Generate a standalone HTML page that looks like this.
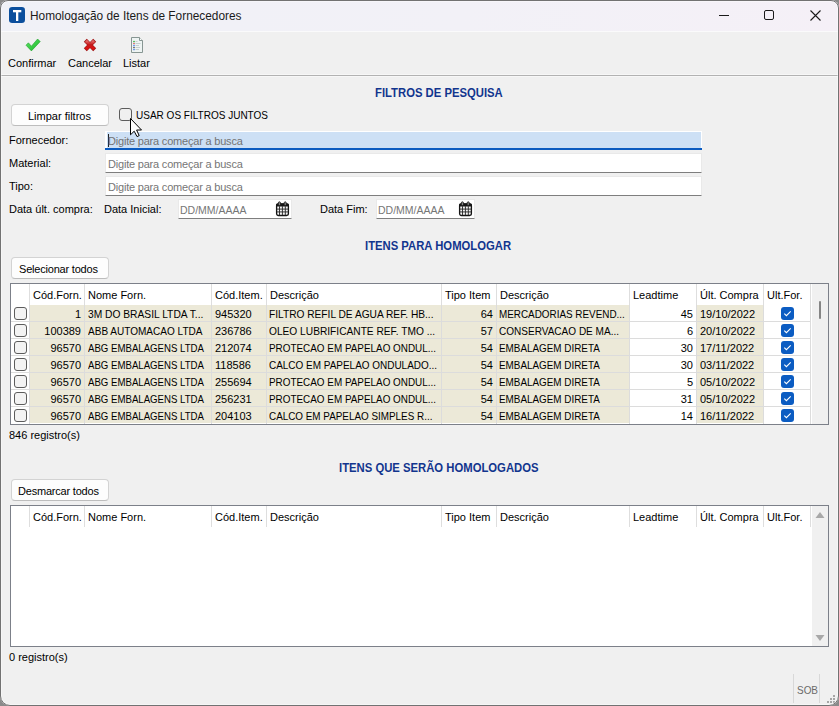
<!DOCTYPE html><html><head><meta charset="utf-8"><style>
*{margin:0;padding:0;box-sizing:border-box}
html,body{width:839px;height:706px;overflow:hidden;background:#8c8c8c}
body{position:relative;font-family:"Liberation Sans", sans-serif;font-size:11px;color:#000}
.abs{position:absolute}
.t{position:absolute;white-space:nowrap;line-height:13px;font-size:11px;color:#000}
.win{position:absolute;left:0;top:0;width:839px;height:706px;background:#f0f0f0;overflow:hidden}
.hl{position:absolute;left:0;top:0;width:839px;height:706px;border-radius:8px 8px 10px 10px;border:1px solid #727272;box-shadow:0 0 0 40px #8a8a8a,inset 0 0 0 1px rgba(255,255,255,.4);pointer-events:none}
.title{position:absolute;left:0;top:0;width:839px;height:31px;background:linear-gradient(90deg,#f0f1f7 0%,#f2f1f7 55%,#f5f0f7 100%)}
.btn{position:absolute;background:#fdfdfd;border:1px solid #d3d3d3;border-bottom-color:#bdbdbd;border-radius:4px}
.sec{position:absolute;white-space:nowrap;line-height:13px;font-size:11px;font-weight:bold;color:#12358e}
.inp{position:absolute;background:#fff;border:1px solid #e9e9e9;border-bottom:1px solid #7e7e7e;border-radius:1px}
.ph{position:absolute;white-space:nowrap;line-height:13px;font-size:11px;color:#767676}
.grid{position:absolute;background:#fff;border:1px solid #7c8089}
.cb{position:absolute;width:13px;height:13px;border:1px solid #5c5c5c;border-radius:3px;background:#f3f3f3}
.cbb{position:absolute;width:13px;height:13px;border-radius:3px;background:#0b5cc2}
.vl{position:absolute;width:1px;background:#dadada}
</style></head><body>
<div class="win">
<div class="title"></div>
<div class="abs" style="left:0px;top:31px;width:839px;height:1px;background:#fafafb"></div>
<svg class="abs" style="left:8px;top:6px" width="18" height="18" viewBox="0 0 18 18"><rect x="1" y="1" width="16" height="16" rx="3.2" fill="#0b4f9d"/><rect x="5" y="4" width="8.3" height="2.3" fill="#fff"/><rect x="8" y="5" width="2.3" height="10" fill="#fff"/></svg>
<div class="t" style="left:30px;top:9px;font-size:12px;line-height:14px;color:#1a1a1a;transform:scaleX(0.9877);transform-origin:0 0">Homologação de Itens de Fornecedores</div>
<div class="abs" style="left:719px;top:15px;width:10px;height:1px;background:#1a1a1a"></div>
<div class="abs" style="left:764px;top:10px;width:10px;height:10px;border:1px solid #1a1a1a;border-radius:2px"></div>
<svg class="abs" style="left:809px;top:9px" width="12" height="12" viewBox="0 0 12 12"><path d="M1.5 1.5L11.5 11.5M11.5 1.5L1.5 11.5" stroke="#1a1a1a" stroke-width="1.1"/></svg>
<svg class="abs" style="left:0;top:0" width="160" height="60" viewBox="0 0 160 60"><defs><linearGradient id="gx" x1="0" y1="0" x2="0" y2="1"><stop offset="0" stop-color="#e46a6a"/><stop offset="0.45" stop-color="#c41a1a"/><stop offset="1" stop-color="#e01010"/></linearGradient><linearGradient id="gc" x1="0" y1="0" x2="1" y2="1"><stop offset="0" stop-color="#5fe36a"/><stop offset="1" stop-color="#17b824"/></linearGradient></defs><path d="M26 45.2L28.4 42.8L31.4 46.2L37.6 39L40.2 41.6L31.4 50.9Z" fill="url(#gc)" stroke="#1e9e28" stroke-width="0.6" stroke-linejoin="round"/><path d="M85.3 40.3L94.7 49.7M94.7 40.3L85.3 49.7" stroke="#a01212" stroke-width="4.2"/><path d="M85.9 40.9L94.1 49.1M94.1 40.9L85.9 49.1" stroke="url(#gx)" stroke-width="3"/><path d="M131.5 37.5H139.5L142.5 40.5V52.5H131.5Z" fill="#eef4f3" stroke="#879693" stroke-width="1"/><path d="M139.5 37.5V40.5H142.5" fill="#fff" stroke="#879693" stroke-width="1"/><circle cx="134" cy="41.5" r="0.85" fill="#2fae3a"/><circle cx="134" cy="43.5" r="0.85" fill="#d25a5a"/><circle cx="134" cy="45.5" r="0.85" fill="#4a80f0"/><circle cx="134" cy="47.5" r="0.85" fill="#555"/><circle cx="134" cy="49.5" r="0.85" fill="#4a80f0"/><path d="M135.5 41.5H137.5M135.5 43.5H140.5M135.5 45.5H139M135.5 47.5H140M135.5 49.5H139" stroke="#c3cfcf" stroke-width="1"/></svg>
<div class="t" style="left:8px;top:57px;">Confirmar</div>
<div class="t" style="left:68px;top:57px;">Cancelar</div>
<div class="t" style="left:123px;top:57px;">Listar</div>
<div class="abs" style="left:1px;top:74px;width:837px;height:1px;background:#f7f7f7"></div>
<div class="abs" style="left:1px;top:75px;width:837px;height:1px;background:#b2b2b2"></div>
<div class="abs" style="left:1px;top:76px;width:837px;height:1px;background:#f7f7f7"></div>
<div class="sec" style="left:374.5px;top:87px;transform:scaleX(0.9404);transform-origin:0 0;font-size:12px">FILTROS DE PESQUISA</div>
<div class="btn" style="left:11px;top:104px;width:98px;height:22px"></div>
<div class="t" style="left:28px;top:110px;">Limpar filtros</div>
<div class="cb" style="left:119px;top:108px;background:#f0f0f0"></div>
<div class="t" style="left:135.5px;top:109px;transform:scaleX(0.9100);transform-origin:0 0;">USAR OS FILTROS JUNTOS</div>
<div class="t" style="left:9px;top:134px;">Fornecedor:</div>
<div class="t" style="left:9px;top:157px;">Material:</div>
<div class="t" style="left:9px;top:180px;">Tipo:</div>
<div class="t" style="left:9px;top:203px;">Data últ. compra:</div>
<div class="abs" style="left:105px;top:131px;width:597px;height:19px;background:#fff"></div>
<div class="abs" style="left:107px;top:132px;width:594px;height:16px;background:#cde0f5"></div>
<div class="abs" style="left:105px;top:148px;width:597px;height:2px;background:#0b5bc0"></div>
<div class="abs" style="left:108px;top:134px;width:1px;height:13px;background:#222"></div>
<div class="ph" style="left:108px;top:135px;color:#737373;letter-spacing:-0.2px">Digite para começar a busca</div>
<div class="inp" style="left:105px;top:153px;width:597px;height:20px"></div>
<div class="ph" style="left:108px;top:158px;letter-spacing:-0.2px">Digite para começar a busca</div>
<div class="inp" style="left:105px;top:176px;width:597px;height:20px"></div>
<div class="ph" style="left:108px;top:181px;letter-spacing:-0.2px">Digite para começar a busca</div>
<div class="t" style="left:104px;top:203px;">Data Inicial:</div>
<div class="t" style="left:320px;top:203px;">Data Fim:</div>
<div class="inp" style="left:178px;top:199px;width:114px;height:20px"></div>
<div class="ph" style="left:179.5px;top:204px;transform:scaleX(0.9544);transform-origin:0 0;">DD/MM/AAAA</div>
<svg class="abs" style="left:274.5px;top:201px" width="15" height="16" viewBox="0 0 16 17"><rect x="1.7" y="3" width="12.6" height="12.4" rx="2" fill="#f4f4f4" stroke="#151515" stroke-width="1.4"/><rect x="1.2" y="2.5" width="13.6" height="3.4" rx="1.5" fill="#151515"/><path d="M4.8 5.5V15M7.9 5.5V15M11 5.5V15M2 8.6H14M2 11.6H14" stroke="#2a2a2a" stroke-width="1"/><rect x="3.6" y="0.8" width="2.2" height="4" rx="1.1" fill="#8a8a8a" stroke="#151515" stroke-width="0.8"/><rect x="9.8" y="0.8" width="2.2" height="4" rx="1.1" fill="#8a8a8a" stroke="#151515" stroke-width="0.8"/></svg>
<div class="inp" style="left:376px;top:199px;width:99px;height:20px"></div>
<div class="ph" style="left:377.5px;top:204px;transform:scaleX(0.9544);transform-origin:0 0;">DD/MM/AAAA</div>
<svg class="abs" style="left:457.5px;top:201px" width="15" height="16" viewBox="0 0 16 17"><rect x="1.7" y="3" width="12.6" height="12.4" rx="2" fill="#f4f4f4" stroke="#151515" stroke-width="1.4"/><rect x="1.2" y="2.5" width="13.6" height="3.4" rx="1.5" fill="#151515"/><path d="M4.8 5.5V15M7.9 5.5V15M11 5.5V15M2 8.6H14M2 11.6H14" stroke="#2a2a2a" stroke-width="1"/><rect x="3.6" y="0.8" width="2.2" height="4" rx="1.1" fill="#8a8a8a" stroke="#151515" stroke-width="0.8"/><rect x="9.8" y="0.8" width="2.2" height="4" rx="1.1" fill="#8a8a8a" stroke="#151515" stroke-width="0.8"/></svg>
<div class="sec" style="left:364.5px;top:240px;transform:scaleX(0.9404);transform-origin:0 0;font-size:12px">ITENS PARA HOMOLOGAR</div>
<div class="btn" style="left:11px;top:257px;width:98px;height:22px"></div>
<div class="t" style="left:19px;top:263px;letter-spacing:-0.2px">Selecionar todos</div>
<div class="grid" style="left:10px;top:283px;width:819px;height:142px"></div>
<div class="abs" style="left:812px;top:284px;width:16px;height:140px;background:#f0f0f0"></div>
<div class="vl" style="left:29px;top:284px;height:21px;background:#dedede"></div>
<div class="vl" style="left:84px;top:284px;height:21px;background:#dedede"></div>
<div class="vl" style="left:211px;top:284px;height:21px;background:#dedede"></div>
<div class="vl" style="left:266px;top:284px;height:21px;background:#dedede"></div>
<div class="vl" style="left:441px;top:284px;height:21px;background:#dedede"></div>
<div class="vl" style="left:496px;top:284px;height:21px;background:#dedede"></div>
<div class="vl" style="left:629px;top:284px;height:21px;background:#dedede"></div>
<div class="vl" style="left:696px;top:284px;height:21px;background:#dedede"></div>
<div class="vl" style="left:763px;top:284px;height:21px;background:#dedede"></div>
<div class="vl" style="left:810px;top:284px;height:21px;background:#dedede"></div>
<div class="t" style="left:33px;top:289px;">Cód.Forn.</div>
<div class="t" style="left:88px;top:289px;">Nome Forn.</div>
<div class="t" style="left:215px;top:289px;">Cód.Item.</div>
<div class="t" style="left:270px;top:289px;">Descrição</div>
<div class="t" style="left:445px;top:289px;">Tipo Item</div>
<div class="t" style="left:500px;top:289px;">Descrição</div>
<div class="t" style="left:633px;top:289px;">Leadtime</div>
<div class="t" style="left:700px;top:289px;">Últ. Compra</div>
<div class="t" style="left:767px;top:289px;">Ult.For.</div>
<div class="abs" style="left:30px;top:305px;width:599px;height:16px;background:#ece9d8"></div>
<div class="abs" style="left:697px;top:305px;width:66px;height:16px;background:#ece9d8"></div>
<div class="abs" style="left:11px;top:321px;width:800px;height:1px;background:#dcdcdc"></div>
<div class="vl" style="left:29px;top:305px;height:17px;background:#dcdcdc"></div>
<div class="vl" style="left:84px;top:305px;height:17px;background:#dcdcdc"></div>
<div class="vl" style="left:211px;top:305px;height:17px;background:#dcdcdc"></div>
<div class="vl" style="left:266px;top:305px;height:17px;background:#dcdcdc"></div>
<div class="vl" style="left:441px;top:305px;height:17px;background:#dcdcdc"></div>
<div class="vl" style="left:496px;top:305px;height:17px;background:#dcdcdc"></div>
<div class="vl" style="left:629px;top:305px;height:17px;background:#dcdcdc"></div>
<div class="vl" style="left:696px;top:305px;height:17px;background:#dcdcdc"></div>
<div class="vl" style="left:763px;top:305px;height:17px;background:#dcdcdc"></div>
<div class="vl" style="left:810px;top:305px;height:17px;background:#dcdcdc"></div>
<div class="cb" style="left:14px;top:307px"></div>
<div class="t" style="left:30px;top:308px;width:51px;text-align:right">1</div>
<div class="t" style="left:87.5px;top:308px;transform:scaleX(0.9312);transform-origin:0 0;">3M DO BRASIL LTDA T...</div>
<div class="t" style="left:215px;top:308px;">945320</div>
<div class="t" style="left:268.5px;top:308px;transform:scaleX(0.9248);transform-origin:0 0;">FILTRO REFIL DE AGUA REF. HB...</div>
<div class="t" style="left:442px;top:308px;width:51px;text-align:right">64</div>
<div class="t" style="left:499px;top:308px;transform:scaleX(0.8988);transform-origin:0 0;">MERCADORIAS REVEND...</div>
<div class="t" style="left:630px;top:308px;width:63px;text-align:right">45</div>
<div class="t" style="left:700px;top:308px;">19/10/2022</div>
<svg class="abs" style="left:781px;top:307px" width="13" height="13" viewBox="0 0 13 13"><rect width="13" height="13" rx="3" fill="#0b5cc2"/><path d="M3.3 6.6L5.4 8.7L9.7 4.4" stroke="#fff" stroke-width="1.1" fill="none"/></svg>
<div class="abs" style="left:30px;top:322px;width:599px;height:16px;background:#ece9d8"></div>
<div class="abs" style="left:697px;top:322px;width:66px;height:16px;background:#ece9d8"></div>
<div class="abs" style="left:11px;top:338px;width:800px;height:1px;background:#dcdcdc"></div>
<div class="vl" style="left:29px;top:322px;height:17px;background:#dcdcdc"></div>
<div class="vl" style="left:84px;top:322px;height:17px;background:#dcdcdc"></div>
<div class="vl" style="left:211px;top:322px;height:17px;background:#dcdcdc"></div>
<div class="vl" style="left:266px;top:322px;height:17px;background:#dcdcdc"></div>
<div class="vl" style="left:441px;top:322px;height:17px;background:#dcdcdc"></div>
<div class="vl" style="left:496px;top:322px;height:17px;background:#dcdcdc"></div>
<div class="vl" style="left:629px;top:322px;height:17px;background:#dcdcdc"></div>
<div class="vl" style="left:696px;top:322px;height:17px;background:#dcdcdc"></div>
<div class="vl" style="left:763px;top:322px;height:17px;background:#dcdcdc"></div>
<div class="vl" style="left:810px;top:322px;height:17px;background:#dcdcdc"></div>
<div class="cb" style="left:14px;top:324px"></div>
<div class="t" style="left:30px;top:325px;width:51px;text-align:right">100389</div>
<div class="t" style="left:87.5px;top:325px;transform:scaleX(0.9118);transform-origin:0 0;">ABB AUTOMACAO LTDA</div>
<div class="t" style="left:215px;top:325px;">236786</div>
<div class="t" style="left:268.5px;top:325px;transform:scaleX(0.9255);transform-origin:0 0;">OLEO LUBRIFICANTE REF. TMO ...</div>
<div class="t" style="left:442px;top:325px;width:51px;text-align:right">57</div>
<div class="t" style="left:499px;top:325px;transform:scaleX(0.9117);transform-origin:0 0;">CONSERVACAO DE MA...</div>
<div class="t" style="left:630px;top:325px;width:63px;text-align:right">6</div>
<div class="t" style="left:700px;top:325px;">20/10/2022</div>
<svg class="abs" style="left:781px;top:324px" width="13" height="13" viewBox="0 0 13 13"><rect width="13" height="13" rx="3" fill="#0b5cc2"/><path d="M3.3 6.6L5.4 8.7L9.7 4.4" stroke="#fff" stroke-width="1.1" fill="none"/></svg>
<div class="abs" style="left:30px;top:339px;width:599px;height:16px;background:#ece9d8"></div>
<div class="abs" style="left:697px;top:339px;width:66px;height:16px;background:#ece9d8"></div>
<div class="abs" style="left:11px;top:355px;width:800px;height:1px;background:#dcdcdc"></div>
<div class="vl" style="left:29px;top:339px;height:17px;background:#dcdcdc"></div>
<div class="vl" style="left:84px;top:339px;height:17px;background:#dcdcdc"></div>
<div class="vl" style="left:211px;top:339px;height:17px;background:#dcdcdc"></div>
<div class="vl" style="left:266px;top:339px;height:17px;background:#dcdcdc"></div>
<div class="vl" style="left:441px;top:339px;height:17px;background:#dcdcdc"></div>
<div class="vl" style="left:496px;top:339px;height:17px;background:#dcdcdc"></div>
<div class="vl" style="left:629px;top:339px;height:17px;background:#dcdcdc"></div>
<div class="vl" style="left:696px;top:339px;height:17px;background:#dcdcdc"></div>
<div class="vl" style="left:763px;top:339px;height:17px;background:#dcdcdc"></div>
<div class="vl" style="left:810px;top:339px;height:17px;background:#dcdcdc"></div>
<div class="cb" style="left:14px;top:341px"></div>
<div class="t" style="left:30px;top:342px;width:51px;text-align:right">96570</div>
<div class="t" style="left:87.5px;top:342px;transform:scaleX(0.8758);transform-origin:0 0;">ABG EMBALAGENS LTDA</div>
<div class="t" style="left:215px;top:342px;">212074</div>
<div class="t" style="left:268.5px;top:342px;transform:scaleX(0.8997);transform-origin:0 0;">PROTECAO EM PAPELAO ONDUL...</div>
<div class="t" style="left:442px;top:342px;width:51px;text-align:right">54</div>
<div class="t" style="left:499px;top:342px;transform:scaleX(0.8979);transform-origin:0 0;">EMBALAGEM DIRETA</div>
<div class="t" style="left:630px;top:342px;width:63px;text-align:right">30</div>
<div class="t" style="left:700px;top:342px;">17/11/2022</div>
<svg class="abs" style="left:781px;top:341px" width="13" height="13" viewBox="0 0 13 13"><rect width="13" height="13" rx="3" fill="#0b5cc2"/><path d="M3.3 6.6L5.4 8.7L9.7 4.4" stroke="#fff" stroke-width="1.1" fill="none"/></svg>
<div class="abs" style="left:30px;top:356px;width:599px;height:16px;background:#ece9d8"></div>
<div class="abs" style="left:697px;top:356px;width:66px;height:16px;background:#ece9d8"></div>
<div class="abs" style="left:11px;top:372px;width:800px;height:1px;background:#dcdcdc"></div>
<div class="vl" style="left:29px;top:356px;height:17px;background:#dcdcdc"></div>
<div class="vl" style="left:84px;top:356px;height:17px;background:#dcdcdc"></div>
<div class="vl" style="left:211px;top:356px;height:17px;background:#dcdcdc"></div>
<div class="vl" style="left:266px;top:356px;height:17px;background:#dcdcdc"></div>
<div class="vl" style="left:441px;top:356px;height:17px;background:#dcdcdc"></div>
<div class="vl" style="left:496px;top:356px;height:17px;background:#dcdcdc"></div>
<div class="vl" style="left:629px;top:356px;height:17px;background:#dcdcdc"></div>
<div class="vl" style="left:696px;top:356px;height:17px;background:#dcdcdc"></div>
<div class="vl" style="left:763px;top:356px;height:17px;background:#dcdcdc"></div>
<div class="vl" style="left:810px;top:356px;height:17px;background:#dcdcdc"></div>
<div class="cb" style="left:14px;top:358px"></div>
<div class="t" style="left:30px;top:359px;width:51px;text-align:right">96570</div>
<div class="t" style="left:87.5px;top:359px;transform:scaleX(0.8758);transform-origin:0 0;">ABG EMBALAGENS LTDA</div>
<div class="t" style="left:215px;top:359px;">118586</div>
<div class="t" style="left:268.5px;top:359px;transform:scaleX(0.9051);transform-origin:0 0;">CALCO EM PAPELAO ONDULADO...</div>
<div class="t" style="left:442px;top:359px;width:51px;text-align:right">54</div>
<div class="t" style="left:499px;top:359px;transform:scaleX(0.8979);transform-origin:0 0;">EMBALAGEM DIRETA</div>
<div class="t" style="left:630px;top:359px;width:63px;text-align:right">30</div>
<div class="t" style="left:700px;top:359px;">03/11/2022</div>
<svg class="abs" style="left:781px;top:358px" width="13" height="13" viewBox="0 0 13 13"><rect width="13" height="13" rx="3" fill="#0b5cc2"/><path d="M3.3 6.6L5.4 8.7L9.7 4.4" stroke="#fff" stroke-width="1.1" fill="none"/></svg>
<div class="abs" style="left:30px;top:373px;width:599px;height:16px;background:#ece9d8"></div>
<div class="abs" style="left:697px;top:373px;width:66px;height:16px;background:#ece9d8"></div>
<div class="abs" style="left:11px;top:389px;width:800px;height:1px;background:#dcdcdc"></div>
<div class="vl" style="left:29px;top:373px;height:17px;background:#dcdcdc"></div>
<div class="vl" style="left:84px;top:373px;height:17px;background:#dcdcdc"></div>
<div class="vl" style="left:211px;top:373px;height:17px;background:#dcdcdc"></div>
<div class="vl" style="left:266px;top:373px;height:17px;background:#dcdcdc"></div>
<div class="vl" style="left:441px;top:373px;height:17px;background:#dcdcdc"></div>
<div class="vl" style="left:496px;top:373px;height:17px;background:#dcdcdc"></div>
<div class="vl" style="left:629px;top:373px;height:17px;background:#dcdcdc"></div>
<div class="vl" style="left:696px;top:373px;height:17px;background:#dcdcdc"></div>
<div class="vl" style="left:763px;top:373px;height:17px;background:#dcdcdc"></div>
<div class="vl" style="left:810px;top:373px;height:17px;background:#dcdcdc"></div>
<div class="cb" style="left:14px;top:375px"></div>
<div class="t" style="left:30px;top:376px;width:51px;text-align:right">96570</div>
<div class="t" style="left:87.5px;top:376px;transform:scaleX(0.8758);transform-origin:0 0;">ABG EMBALAGENS LTDA</div>
<div class="t" style="left:215px;top:376px;">255694</div>
<div class="t" style="left:268.5px;top:376px;transform:scaleX(0.8997);transform-origin:0 0;">PROTECAO EM PAPELAO ONDUL...</div>
<div class="t" style="left:442px;top:376px;width:51px;text-align:right">54</div>
<div class="t" style="left:499px;top:376px;transform:scaleX(0.8979);transform-origin:0 0;">EMBALAGEM DIRETA</div>
<div class="t" style="left:630px;top:376px;width:63px;text-align:right">5</div>
<div class="t" style="left:700px;top:376px;">05/10/2022</div>
<svg class="abs" style="left:781px;top:375px" width="13" height="13" viewBox="0 0 13 13"><rect width="13" height="13" rx="3" fill="#0b5cc2"/><path d="M3.3 6.6L5.4 8.7L9.7 4.4" stroke="#fff" stroke-width="1.1" fill="none"/></svg>
<div class="abs" style="left:30px;top:390px;width:599px;height:16px;background:#ece9d8"></div>
<div class="abs" style="left:697px;top:390px;width:66px;height:16px;background:#ece9d8"></div>
<div class="abs" style="left:11px;top:406px;width:800px;height:1px;background:#dcdcdc"></div>
<div class="vl" style="left:29px;top:390px;height:17px;background:#dcdcdc"></div>
<div class="vl" style="left:84px;top:390px;height:17px;background:#dcdcdc"></div>
<div class="vl" style="left:211px;top:390px;height:17px;background:#dcdcdc"></div>
<div class="vl" style="left:266px;top:390px;height:17px;background:#dcdcdc"></div>
<div class="vl" style="left:441px;top:390px;height:17px;background:#dcdcdc"></div>
<div class="vl" style="left:496px;top:390px;height:17px;background:#dcdcdc"></div>
<div class="vl" style="left:629px;top:390px;height:17px;background:#dcdcdc"></div>
<div class="vl" style="left:696px;top:390px;height:17px;background:#dcdcdc"></div>
<div class="vl" style="left:763px;top:390px;height:17px;background:#dcdcdc"></div>
<div class="vl" style="left:810px;top:390px;height:17px;background:#dcdcdc"></div>
<div class="cb" style="left:14px;top:392px"></div>
<div class="t" style="left:30px;top:393px;width:51px;text-align:right">96570</div>
<div class="t" style="left:87.5px;top:393px;transform:scaleX(0.8758);transform-origin:0 0;">ABG EMBALAGENS LTDA</div>
<div class="t" style="left:215px;top:393px;">256231</div>
<div class="t" style="left:268.5px;top:393px;transform:scaleX(0.8997);transform-origin:0 0;">PROTECAO EM PAPELAO ONDUL...</div>
<div class="t" style="left:442px;top:393px;width:51px;text-align:right">54</div>
<div class="t" style="left:499px;top:393px;transform:scaleX(0.8979);transform-origin:0 0;">EMBALAGEM DIRETA</div>
<div class="t" style="left:630px;top:393px;width:63px;text-align:right">31</div>
<div class="t" style="left:700px;top:393px;">05/10/2022</div>
<svg class="abs" style="left:781px;top:392px" width="13" height="13" viewBox="0 0 13 13"><rect width="13" height="13" rx="3" fill="#0b5cc2"/><path d="M3.3 6.6L5.4 8.7L9.7 4.4" stroke="#fff" stroke-width="1.1" fill="none"/></svg>
<div class="abs" style="left:30px;top:407px;width:599px;height:16px;background:#ece9d8"></div>
<div class="abs" style="left:697px;top:407px;width:66px;height:16px;background:#ece9d8"></div>
<div class="vl" style="left:29px;top:407px;height:17px;background:#dcdcdc"></div>
<div class="vl" style="left:84px;top:407px;height:17px;background:#dcdcdc"></div>
<div class="vl" style="left:211px;top:407px;height:17px;background:#dcdcdc"></div>
<div class="vl" style="left:266px;top:407px;height:17px;background:#dcdcdc"></div>
<div class="vl" style="left:441px;top:407px;height:17px;background:#dcdcdc"></div>
<div class="vl" style="left:496px;top:407px;height:17px;background:#dcdcdc"></div>
<div class="vl" style="left:629px;top:407px;height:17px;background:#dcdcdc"></div>
<div class="vl" style="left:696px;top:407px;height:17px;background:#dcdcdc"></div>
<div class="vl" style="left:763px;top:407px;height:17px;background:#dcdcdc"></div>
<div class="vl" style="left:810px;top:407px;height:17px;background:#dcdcdc"></div>
<div class="cb" style="left:14px;top:409px"></div>
<div class="t" style="left:30px;top:410px;width:51px;text-align:right">96570</div>
<div class="t" style="left:87.5px;top:410px;transform:scaleX(0.8758);transform-origin:0 0;">ABG EMBALAGENS LTDA</div>
<div class="t" style="left:215px;top:410px;">204103</div>
<div class="t" style="left:268.5px;top:410px;transform:scaleX(0.8980);transform-origin:0 0;">CALCO EM PAPELAO SIMPLES R...</div>
<div class="t" style="left:442px;top:410px;width:51px;text-align:right">54</div>
<div class="t" style="left:499px;top:410px;transform:scaleX(0.8979);transform-origin:0 0;">EMBALAGEM DIRETA</div>
<div class="t" style="left:630px;top:410px;width:63px;text-align:right">14</div>
<div class="t" style="left:700px;top:410px;">16/11/2022</div>
<svg class="abs" style="left:781px;top:409px" width="13" height="13" viewBox="0 0 13 13"><rect width="13" height="13" rx="3" fill="#0b5cc2"/><path d="M3.3 6.6L5.4 8.7L9.7 4.4" stroke="#fff" stroke-width="1.1" fill="none"/></svg>
<div class="abs" style="left:819px;top:301px;width:2px;height:18px;background:#858585;border-radius:1px"></div>
<div class="t" style="left:9px;top:429px;">846 registro(s)</div>
<div class="sec" style="left:338.5px;top:462px;transform:scaleX(0.9410);transform-origin:0 0;font-size:12px">ITENS QUE SERÃO HOMOLOGADOS</div>
<div class="btn" style="left:11px;top:479px;width:98px;height:22px"></div>
<div class="t" style="left:18px;top:485px;letter-spacing:-0.2px">Desmarcar todos</div>
<div class="grid" style="left:10px;top:505px;width:819px;height:142px"></div>
<div class="abs" style="left:812px;top:506px;width:16px;height:140px;background:#f0f0f0"></div>
<div class="vl" style="left:29px;top:506px;height:21px;background:#dedede"></div>
<div class="vl" style="left:84px;top:506px;height:21px;background:#dedede"></div>
<div class="vl" style="left:211px;top:506px;height:21px;background:#dedede"></div>
<div class="vl" style="left:266px;top:506px;height:21px;background:#dedede"></div>
<div class="vl" style="left:441px;top:506px;height:21px;background:#dedede"></div>
<div class="vl" style="left:496px;top:506px;height:21px;background:#dedede"></div>
<div class="vl" style="left:629px;top:506px;height:21px;background:#dedede"></div>
<div class="vl" style="left:696px;top:506px;height:21px;background:#dedede"></div>
<div class="vl" style="left:763px;top:506px;height:21px;background:#dedede"></div>
<div class="vl" style="left:810px;top:506px;height:21px;background:#dedede"></div>
<div class="t" style="left:33px;top:511px;">Cód.Forn.</div>
<div class="t" style="left:88px;top:511px;">Nome Forn.</div>
<div class="t" style="left:215px;top:511px;">Cód.Item.</div>
<div class="t" style="left:270px;top:511px;">Descrição</div>
<div class="t" style="left:445px;top:511px;">Tipo Item</div>
<div class="t" style="left:500px;top:511px;">Descrição</div>
<div class="t" style="left:633px;top:511px;">Leadtime</div>
<div class="t" style="left:700px;top:511px;">Últ. Compra</div>
<div class="t" style="left:767px;top:511px;">Ult.For.</div>
<svg class="abs" style="left:815px;top:511px" width="10" height="8" viewBox="0 0 10 8"><path d="M0.5 7L5 1L9.5 7Z" fill="#a8a8a8"/></svg>
<svg class="abs" style="left:815px;top:634px" width="10" height="8" viewBox="0 0 10 8"><path d="M0.5 1L5 7L9.5 1Z" fill="#a8a8a8"/></svg>
<div class="t" style="left:9px;top:651px;">0 registro(s)</div>
<div class="abs" style="left:793px;top:674px;width:1px;height:29px;background:#d8d8d8"></div>
<div class="abs" style="left:819px;top:674px;width:1px;height:29px;background:#d8d8d8"></div>
<div class="t" style="left:797px;top:684px;transform:scaleX(0.9040);transform-origin:0 0;color:#6a6a6a">SOB</div>
<div class="abs" style="left:833px;top:695px;width:2px;height:2px;background:#a6a6a6"></div>
<div class="abs" style="left:830px;top:698px;width:2px;height:2px;background:#a6a6a6"></div>
<div class="abs" style="left:833px;top:698px;width:2px;height:2px;background:#a6a6a6"></div>
<div class="abs" style="left:827px;top:701px;width:2px;height:2px;background:#a6a6a6"></div>
<div class="abs" style="left:830px;top:701px;width:2px;height:2px;background:#a6a6a6"></div>
<div class="abs" style="left:833px;top:701px;width:2px;height:2px;background:#a6a6a6"></div>
<svg class="abs" style="left:129px;top:117px" width="14" height="21" viewBox="0 0 14 21"><path d="M1.5 1.5V17.8L5.2 14.2L8 19.6L10.2 18.6L7.6 13H12.5Z" fill="#fff" stroke="#000" stroke-width="1" stroke-linejoin="miter"/></svg>
<div class="hl"></div>
</div>
</body></html>
